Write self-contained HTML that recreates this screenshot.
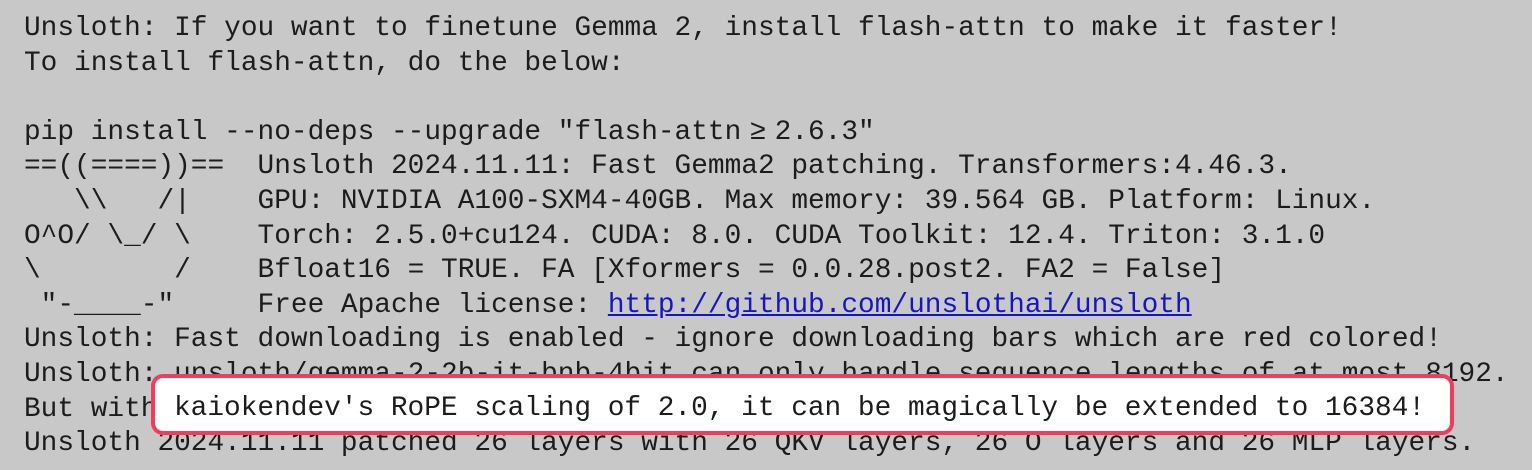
<!DOCTYPE html>
<html><head><meta charset="utf-8"><style>
html,body{margin:0;padding:0}
body{width:1532px;height:470px;background:#c8c8c8;overflow:hidden;position:relative}
pre{margin:0;position:absolute;left:24px;top:12px;font-family:"Liberation Mono",monospace;font-size:27.8px;line-height:34.6px;color:#1c1c1c}
a{color:#1515c8;text-decoration:underline}
.ge{display:inline-block;width:2ch;text-align:center}
.box{position:absolute;left:151px;top:374px;width:1295px;height:53px;background:#fff;border:4px solid #f23c5c;border-radius:12px;font-family:"Liberation Mono",monospace;font-size:27.8px;color:#1c1c1c;white-space:pre;box-sizing:content-box}
.box span{position:absolute;left:19px;top:14px;line-height:34.6px}
</style></head><body>
<pre>Unsloth: If you want to finetune Gemma 2, install flash-attn to make it faster!
To install flash-attn, do the below:

pip install --no-deps --upgrade "flash-attn<span class="ge">≥</span>2.6.3"
==((====))==  Unsloth 2024.11.11: Fast Gemma2 patching. Transformers:4.46.3.
   \\   /|    GPU: NVIDIA A100-SXM4-40GB. Max memory: 39.564 GB. Platform: Linux.
O^O/ \_/ \    Torch: 2.5.0+cu124. CUDA: 8.0. CUDA Toolkit: 12.4. Triton: 3.1.0
\        /    Bfloat16 = TRUE. FA [Xformers = 0.0.28.post2. FA2 = False]
 "-____-"     Free Apache license: <a>http://github.com/unslothai/unsloth</a>
Unsloth: Fast downloading is enabled - ignore downloading bars which are red colored!
Unsloth: unsloth/gemma-2-2b-it-bnb-4bit can only handle sequence lengths of at most 8192.
But with kaiokendev's RoPE scaling of 2.0, it can be magically be extended to 16384!
Unsloth 2024.11.11 patched 26 layers with 26 QKV layers, 26 O layers and 26 MLP layers.</pre>
<div class="box"><span>kaiokendev's RoPE scaling of 2.0, it can be magically be extended to 16384!</span></div>
</body></html>
